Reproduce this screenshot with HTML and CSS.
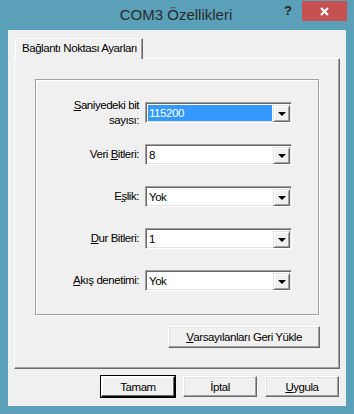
FILE: index.html
```html
<!DOCTYPE html>
<html lang="tr">
<head>
<meta charset="utf-8">
<title>COM3 Özellikleri</title>
<link rel="stylesheet" href="styles.css">
</head>
<body>
<div class="window">
  <div class="titlebar">
    <div class="title">COM3 Özellikleri</div>
    <div class="help">?</div>
    <div class="close">
      <svg width="9" height="9" viewBox="0 0 9 9"><path d="M1 1 L8 8 M8 1 L1 8" stroke="#fff" stroke-width="2.2" fill="none"/></svg>
    </div>
  </div>
  <div class="client">
    <div class="tabs"><div class="tab">Bağlantı Noktası Ayarları</div></div>
    <div class="panel">
      <div class="group">
        <div class="row">
          <div class="label"><u>S</u>aniyedeki bit<br>sayısı:</div>
          <div class="combo"><div class="value selected">115200</div><div class="drop"><span class="tri"></span></div></div>
        </div>
        <div class="row">
          <div class="label">Veri <u>B</u>itleri:</div>
          <div class="combo"><div class="value">8</div><div class="drop"><span class="tri"></span></div></div>
        </div>
        <div class="row">
          <div class="label">E<u>ş</u>lik:</div>
          <div class="combo"><div class="value">Yok</div><div class="drop"><span class="tri"></span></div></div>
        </div>
        <div class="row">
          <div class="label"><u>D</u>ur Bitleri:</div>
          <div class="combo"><div class="value">1</div><div class="drop"><span class="tri"></span></div></div>
        </div>
        <div class="row">
          <div class="label"><u>A</u>kış denetimi:</div>
          <div class="combo"><div class="value">Yok</div><div class="drop"><span class="tri"></span></div></div>
        </div>
      </div>
      <div class="restore-row">
        <div class="btn restore"><u>V</u>arsayılanları Geri Yükle</div>
      </div>
    </div>
    <div class="actions">
      <div class="btn default">Tamam</div>
      <div class="btn">İptal</div>
      <div class="btn"><u>U</u>ygula</div>
    </div>
  </div>
</div>
</body>
</html>
```

FILE: styles.css
```css
* { box-sizing: border-box; }
html, body { margin: 0; padding: 0; }
body {
  width: 354px;
  height: 414px;
  overflow: hidden;
  font-family: "Liberation Sans", Arial, sans-serif;
  font-size: 11.5px;
  letter-spacing: -0.45px;
  color: #000;
}
.window {
  width: 354px;
  height: 414px;
  background: #5ba0b9;
  padding: 0 8px 8px 8px;
  display: flex;
  flex-direction: column;
}
.titlebar {
  height: 30px;
  display: flex;
  align-items: flex-start;
  margin: 0 -8px;
  padding-right: 7px;
  letter-spacing: 0;
}
.title {
  flex: 1;
  padding-left: 70px;
  text-align: center;
  font-size: 15px;
  color: #2a2a2a;
  line-height: 30px;
}
.help {
  width: 12px;
  margin-right: 8px;
  text-align: center;
  font-weight: bold;
  font-size: 13px;
  color: #222;
  line-height: 22px;
}
.close {
  width: 45px;
  height: 20px;
  margin-top: 1px;
  background: #c75050;
  display: flex;
  align-items: center;
  justify-content: center;
}
.client {
  flex: 1;
  background: #f0f0f0;
  padding: 8px 7px 0 6px;
  display: flex;
  flex-direction: column;
}
.tabs {
  height: 20px;
  display: flex;
  padding-left: 1px;
  position: relative;
  z-index: 1;
}
.tab {
  width: 128px;
  height: 21px;
  background: #f0f0f0;
  border-top: 1px solid #fff;
  border-left: 1px solid #fff;
  border-right: 1px solid #696969;
  box-shadow: inset -1px 0 0 #a0a0a0;
  padding-left: 6px;
  line-height: 19px;
  white-space: nowrap;
  overflow: hidden;
}
.panel {
  width: 326px;
  height: 311px;
  border-top: 1px solid #fff;
  border-left: 1px solid #fff;
  border-right: 1px solid #696969;
  border-bottom: 1px solid #696969;
  box-shadow: inset -1px -1px 0 #a0a0a0;
  padding: 20px 0 0 20px;
  display: flex;
  flex-direction: column;
}
.group {
  width: 284px;
  height: 236px;
  border: 1px solid #a0a0a0;
  box-shadow: 1px 1px 0 #fff, inset 1px 1px 0 #fff;
  padding-top: 22px;
  display: flex;
  flex-direction: column;
  gap: 21px;
}
.row {
  height: 21px;
  display: flex;
  align-items: center;
}
.label {
  width: 103px;
  margin-right: 6px;
  text-align: right;
  line-height: 15px;
  white-space: nowrap;
}
.combo {
  width: 147px;
  height: 21px;
  background: #fff;
  border-top: 1px solid #a0a0a0;
  border-left: 1px solid #a0a0a0;
  border-right: 1px solid #fff;
  border-bottom: 1px solid #fff;
  box-shadow: inset 1px 1px 0 #696969, inset -1px -1px 0 #e3e3e3;
  padding: 2px 1px 1px 2px;
  display: flex;
}
.value {
  flex: 1;
  padding-left: 1px;
  line-height: 16px;
  margin-right: 1px;
}
.value.selected {
  background: #3399ff;
  color: #fff;
}
.drop {
  width: 17px;
  height: 17px;
  background: #f0f0f0;
  border-top: 1px solid #e3e3e3;
  border-left: 1px solid #e3e3e3;
  border-right: 1px solid #696969;
  border-bottom: 1px solid #696969;
  box-shadow: inset 1px 1px 0 #fff, inset -1px -1px 0 #a0a0a0;
  display: flex;
  align-items: center;
  justify-content: center;
}
.tri {
  width: 0;
  height: 0;
  border-left: 4px solid transparent;
  border-right: 4px solid transparent;
  border-top: 4px solid #000;
  margin-top: 1px;
}
.restore-row {
  display: flex;
  justify-content: flex-end;
  padding-right: 19px;
  margin-top: 11px;
}
.btn {
  height: 22px;
  background: #f0f0f0;
  border-top: 1px solid #fff;
  border-left: 1px solid #fff;
  border-right: 1px solid #696969;
  border-bottom: 1px solid #696969;
  box-shadow: inset -1px -1px 0 #a0a0a0, inset 1px 1px 0 #e3e3e3;
  display: flex;
  align-items: center;
  justify-content: center;
  white-space: nowrap;
}
.restore { width: 152px; }
.actions {
  margin-top: 7px;
  display: flex;
  justify-content: flex-end;
  gap: 8px;
}
.actions .btn {
  width: 74px;
  height: 21px;
}
.btn.default {
  outline: 1px solid #000;
  outline-offset: 0;
  border-right-color: #000;
  border-bottom-color: #000;
  box-shadow: inset -1px -1px 0 #696969, inset 1px 1px 0 #fff;
}
u { text-decoration: underline; text-underline-offset: 1px; }
```
